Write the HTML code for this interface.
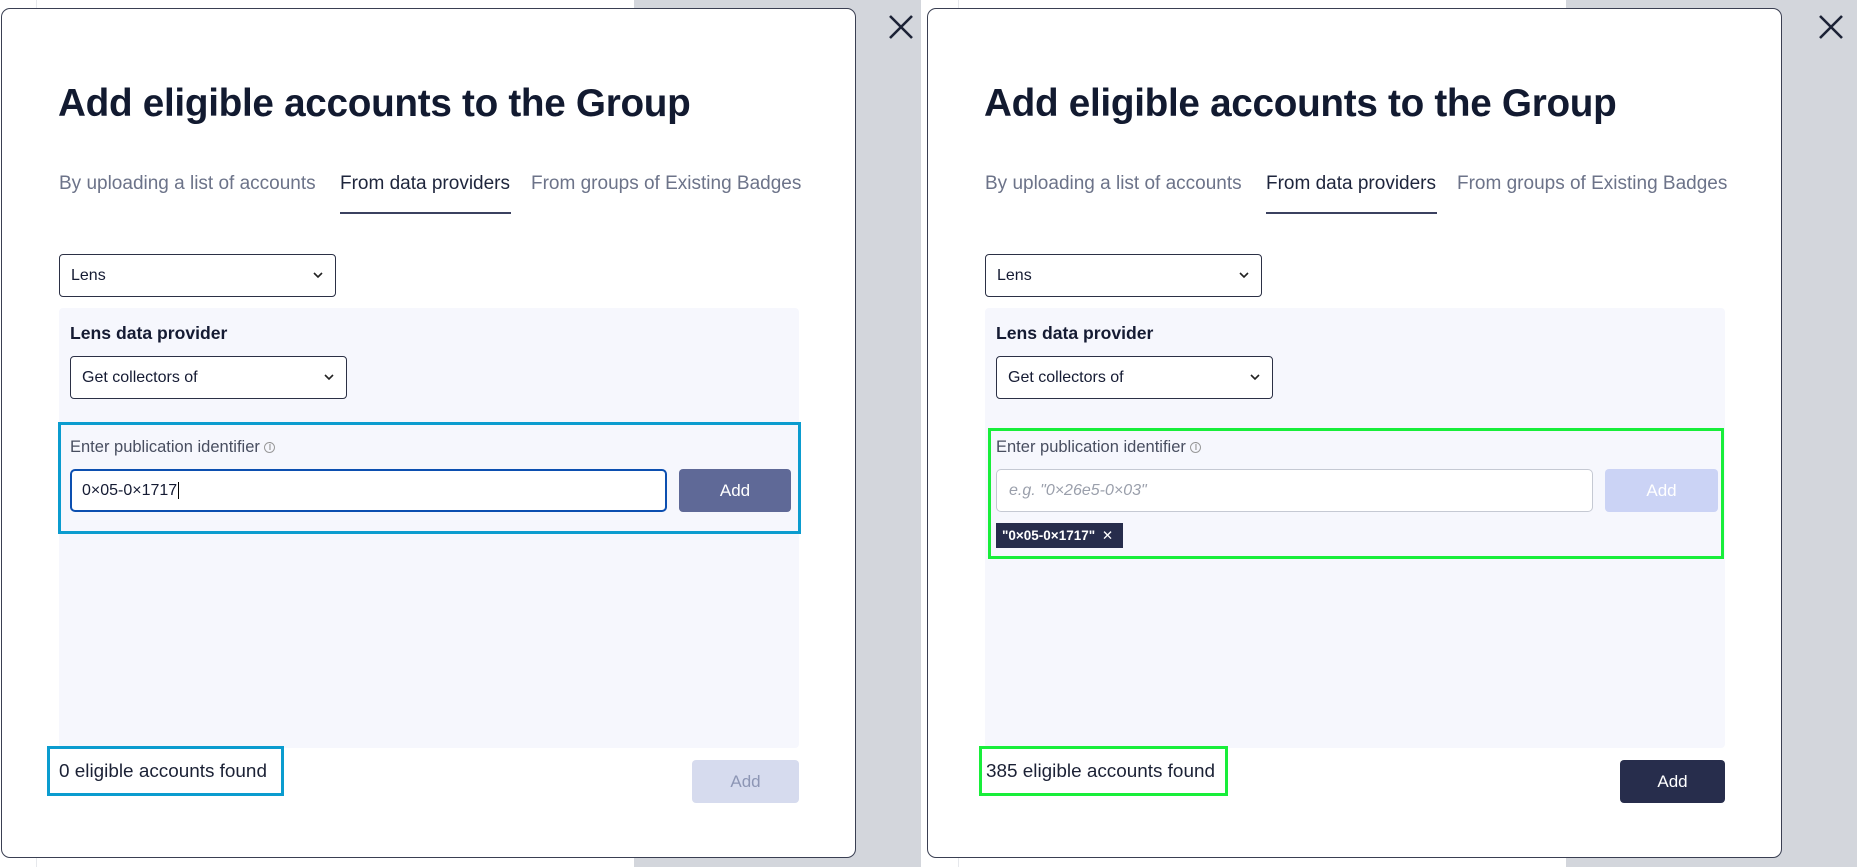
<!DOCTYPE html>
<html><head><meta charset="utf-8"><style>
*{box-sizing:border-box;margin:0;padding:0}
body{width:1857px;height:867px;position:relative;overflow:hidden;background:#fff;font-family:"Liberation Sans",sans-serif;color:#151b33}
.a{position:absolute}
.gray{background:#d3d6dc}
.modal{position:absolute;top:8px;width:855px;height:850px;background:#fff;border:1.5px solid #3a3f52;border-radius:9px}
.title{position:absolute;left:56px;top:73px;font-size:38.7px;font-weight:bold;letter-spacing:-0.3px;color:#121a30}
.tab{position:absolute;top:164px;font-size:19px;color:#6c7389}
.tab.on{color:#1e253c}
.uline{position:absolute;left:338px;top:203px;width:171px;height:1.5px;background:#3b4160}
.sel{position:absolute;background:#fff;border:1px solid #2b3045;border-radius:4px;font-size:16px;padding-left:11px;display:flex;align-items:center}
.sel svg{position:absolute;right:12px;top:50%;margin-top:-4px}
.panel{position:absolute;left:57px;top:299px;width:740px;height:440px;background:#f6f7fd;border-radius:4px}
.lbl{position:absolute;font-size:16.5px;color:#484e60}
.btn{position:absolute;border-radius:4px;font-size:17px;display:flex;align-items:center;justify-content:center}
</style></head><body>
<div class="a" style="left:36px;top:0;width:1px;height:867px;background:#e6e8ec"></div>
<div class="a gray" style="left:634px;top:0;width:287px;height:867px"></div>
<div class="a gray" style="left:1566px;top:0;width:291px;height:867px"></div>
<div class="a" style="left:958px;top:0;width:1px;height:867px;background:#e6e8ec"></div>
<svg class="a" style="left:887px;top:13px" width="28" height="28" viewBox="0 0 28 28"><path d="M3 3L25 25M25 3L3 25" stroke="#1c2236" stroke-width="2.6"/></svg>
<svg class="a" style="left:1817px;top:13px" width="28" height="28" viewBox="0 0 28 28"><path d="M3 3L25 25M25 3L3 25" stroke="#1c2236" stroke-width="2.6"/></svg>

<div class="modal" style="left:1px">
<div class="title">Add eligible accounts to the Group</div>
<div class="tab" style="left:57px">By uploading a list of accounts</div>
<div class="tab on" style="left:338px">From data providers</div>
<div class="tab" style="left:529px">From groups of Existing Badges</div>
<div class="uline"></div>
<div class="sel" style="left:57px;top:245px;width:277px;height:43px">Lens<svg width="10" height="7" viewBox="0 0 10 7"><path d="M1 1l4 4 4-4" stroke="#222" stroke-width="1.6" fill="none"/></svg></div>
<div class="panel"></div>
<div class="a" style="left:68px;top:314px;font-size:17.6px;font-weight:bold">Lens data provider</div>
<div class="sel" style="left:68px;top:347px;width:277px;height:43px">Get collectors of<svg width="10" height="7" viewBox="0 0 10 7"><path d="M1 1l4 4 4-4" stroke="#222" stroke-width="1.6" fill="none"/></svg></div>
<div class="a" style="left:56px;top:413px;width:743px;height:112px;border:3px solid #0b9ccf"></div>
<div class="lbl" style="left:68px;top:429px">Enter publication identifier <span style="font-size:11px;color:#888;border:1px solid #999;border-radius:50%;display:inline-block;width:11px;height:11px;line-height:9px;text-align:center;vertical-align:2px">i</span></div>
<div class="a" style="left:68px;top:460px;width:597px;height:43px;border:2px solid #0c4fb0;border-radius:5px;background:#fff;font-size:16px;padding:11px 0 0 10px">0×05-0×1717<span style="border-left:1px solid #000;margin-left:1px"></span></div>
<div class="btn" style="left:677px;top:460px;width:112px;height:43px;background:#5f6997;color:#fff">Add</div>
<div class="a" style="left:45px;top:737px;width:237px;height:50px;border:3px solid #0b9ccf"></div>
<div class="a" style="left:57px;top:752px;font-size:18.9px;color:#1b2135">0 eligible accounts found</div>
<div class="btn" style="left:690px;top:751px;width:107px;height:43px;background:#d6dbee;color:#8d96b5">Add</div>
</div>

<div class="modal" style="left:927px">
<div class="title">Add eligible accounts to the Group</div>
<div class="tab" style="left:57px">By uploading a list of accounts</div>
<div class="tab on" style="left:338px">From data providers</div>
<div class="tab" style="left:529px">From groups of Existing Badges</div>
<div class="uline"></div>
<div class="sel" style="left:57px;top:245px;width:277px;height:43px">Lens<svg width="10" height="7" viewBox="0 0 10 7"><path d="M1 1l4 4 4-4" stroke="#222" stroke-width="1.6" fill="none"/></svg></div>
<div class="panel"></div>
<div class="a" style="left:68px;top:314px;font-size:17.6px;font-weight:bold">Lens data provider</div>
<div class="sel" style="left:68px;top:347px;width:277px;height:43px">Get collectors of<svg width="10" height="7" viewBox="0 0 10 7"><path d="M1 1l4 4 4-4" stroke="#222" stroke-width="1.6" fill="none"/></svg></div>
<div class="a" style="left:60px;top:419px;width:736px;height:131px;border:3px solid #18ee3a"></div>
<div class="lbl" style="left:68px;top:429px">Enter publication identifier <span style="font-size:11px;color:#888;border:1px solid #999;border-radius:50%;display:inline-block;width:11px;height:11px;line-height:9px;text-align:center;vertical-align:2px">i</span></div>
<div class="a" style="left:68px;top:460px;width:597px;height:43px;border:1px solid #c5c9d3;border-radius:5px;background:#fff;font-size:16px;padding:12px 0 0 12px;color:#9a9fab;font-style:italic">e.g. "0×26e5-0×03"</div>
<div class="btn" style="left:677px;top:460px;width:113px;height:43px;background:#cbd3f5;color:#fff">Add</div>
<div class="a" style="left:68px;top:514px;width:127px;height:25px;background:#272d4c;color:#fff;font-size:13.5px;font-weight:bold;padding:5px 0 0 6px">"0×05-0×1717" <span style="font-weight:normal;margin-left:3px">✕</span></div>
<div class="a" style="left:51px;top:737px;width:249px;height:50px;border:3px solid #18ee3a"></div>
<div class="a" style="left:58px;top:752px;font-size:18.9px;color:#1b2135">385 eligible accounts found</div>
<div class="btn" style="left:692px;top:751px;width:105px;height:43px;background:#272d4c;color:#fff">Add</div>
</div>
</body></html>
